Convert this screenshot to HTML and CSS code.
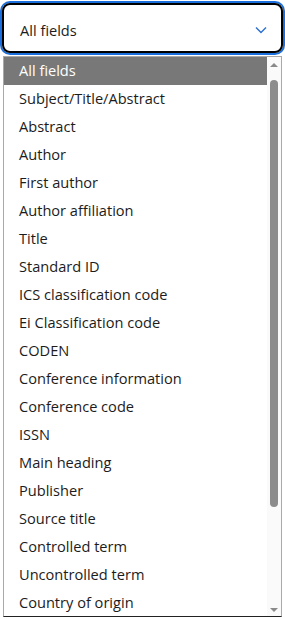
FILE: index.html
```html
<!DOCTYPE html>
<html lang="en">
<head>
    <meta charset="UTF-8">
    <meta name="viewport" content="width=device-width, initial-scale=1.0">
    <title>Search field</title>
    <link rel="stylesheet" href="styles.css">
</head>
<body>
    <div class="select">
        <span class="select-value">All fields</span>
        <svg class="chevron" width="12" height="8" viewBox="0 0 12 8">
            <path d="M1 1.5 L6 6.5 L11 1.5" fill="none" stroke="#2b6fd4" stroke-width="1.4"/>
        </svg>
    </div>

    <div class="dropdown">
        <ul class="options">
            <li class="option selected">All fields</li>
            <li class="option">Subject/Title/Abstract</li>
            <li class="option">Abstract</li>
            <li class="option">Author</li>
            <li class="option">First author</li>
            <li class="option">Author affiliation</li>
            <li class="option">Title</li>
            <li class="option">Standard ID</li>
            <li class="option">ICS classification code</li>
            <li class="option">Ei Classification code</li>
            <li class="option">CODEN</li>
            <li class="option">Conference information</li>
            <li class="option">Conference code</li>
            <li class="option">ISSN</li>
            <li class="option">Main heading</li>
            <li class="option">Publisher</li>
            <li class="option">Source title</li>
            <li class="option">Controlled term</li>
            <li class="option">Uncontrolled term</li>
            <li class="option">Country of origin</li>
        </ul>
        <div class="scrollbar">
            <span class="arrow up"></span>
            <span class="thumb"></span>
            <span class="arrow down"></span>
        </div>
    </div>
</body>
</html>
```

FILE: styles.css
```css
:root {
    --ring-color: #1b6fdc;
    --text-color: #1c1c1c;
    --selected-bg: #787878;
    --thumb-color: #8c8c8c;
}

* {
    box-sizing: border-box;
}

body {
    margin: 0;
    padding: 3px 0 0;
    background-color: #fff;
    font-family: 'Open Sans', 'Noto Sans', sans-serif;
    color: var(--text-color);
    width: 285px;
    height: 619px;
    overflow: hidden;
}

.select {
    margin: 0 2px;
    height: 50px;
    border: 2px solid #000;
    border-radius: 8px;
    box-shadow: 0 0 0 2px var(--ring-color);
    display: flex;
    align-items: center;
    justify-content: space-between;
    padding: 4px 14px 0 16px;
    font-size: 14.6px;
}

.chevron {
    display: block;
}

.dropdown {
    margin: 3px 3px 0;
    height: 561px;
    border: 1px solid #a9a9a9;
    border-bottom-color: #222;
    background-color: #fff;
    display: flex;
    overflow: hidden;
}

.options {
    list-style: none;
    margin: 0;
    padding: 0;
    flex: 1;
}

.option {
    height: 28px;
    line-height: 27px;
    padding-left: 15px;
    font-size: 14.6px;
    white-space: nowrap;
}

.option.selected {
    background-color: var(--selected-bg);
    color: #fff;
}

.scrollbar {
    width: 14px;
    background-color: #fafafa;
    display: flex;
    flex-direction: column;
    align-items: center;
    padding: 6px 0 4px;
}

.arrow {
    width: 0;
    height: 0;
    border-left: 4px solid transparent;
    border-right: 4px solid transparent;
}

.arrow.up {
    border-bottom: 4px solid #8a8a8a;
}

.arrow.down {
    border-top: 4px solid #8a8a8a;
    margin-top: auto;
}

.thumb {
    width: 8px;
    height: 427px;
    margin-top: 13px;
    background-color: var(--thumb-color);
    border-radius: 4px;
}
```
